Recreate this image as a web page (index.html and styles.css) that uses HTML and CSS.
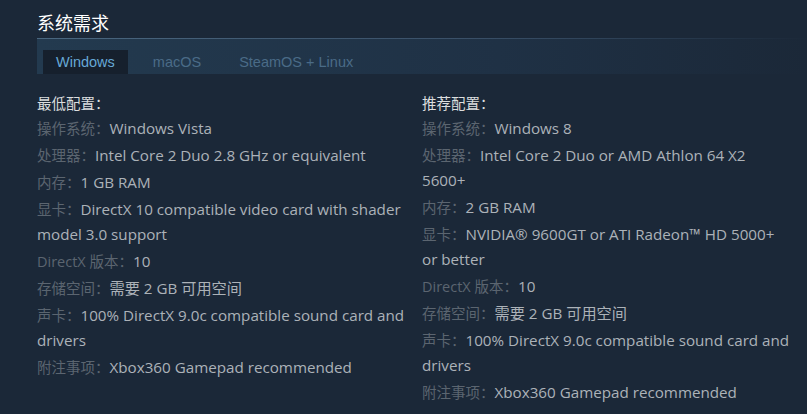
FILE: index.html
```html
<!DOCTYPE html>
<html lang="zh-CN">
<head>
  <meta charset="UTF-8">
  <title>系统需求</title>
  <link rel="stylesheet" href="styles.css">
</head>
<body>
  <div class="sysreq">
    <h2>系统需求</h2>

    <div class="tabs">
      <div class="tab active">Windows</div>
      <div class="tab">macOS</div>
      <div class="tab">SteamOS + Linux</div>
    </div>

    <div class="req-cols">
      <div class="req-col">
        <div class="req-title">最低配置：</div>
        <ul>
          <li><span class="lbl">操作系统：</span>Windows Vista</li>
          <li><span class="lbl">处理器：</span>Intel Core 2 Duo 2.8 GHz or equivalent</li>
          <li><span class="lbl">内存：</span>1 GB RAM</li>
          <li><span class="lbl">显卡：</span>DirectX 10 compatible video card with shader model 3.0 support</li>
          <li><span class="lbl">DirectX 版本：</span>10</li>
          <li><span class="lbl">存储空间：</span>需要 2 GB 可用空间</li>
          <li><span class="lbl">声卡：</span>100% DirectX 9.0c compatible sound card and drivers</li>
          <li><span class="lbl">附注事项：</span>Xbox360 Gamepad recommended</li>
        </ul>
      </div>
      <div class="req-col">
        <div class="req-title">推荐配置：</div>
        <ul>
          <li><span class="lbl">操作系统：</span>Windows 8</li>
          <li><span class="lbl">处理器：</span>Intel Core 2 Duo or AMD Athlon 64 X2 5600+</li>
          <li><span class="lbl">内存：</span>2 GB RAM</li>
          <li><span class="lbl">显卡：</span>NVIDIA® 9600GT or ATI Radeon™ HD 5000+ or better</li>
          <li><span class="lbl">DirectX 版本：</span>10</li>
          <li><span class="lbl">存储空间：</span>需要 2 GB 可用空间</li>
          <li><span class="lbl">声卡：</span>100% DirectX 9.0c compatible sound card and drivers</li>
          <li><span class="lbl">附注事项：</span>Xbox360 Gamepad recommended</li>
        </ul>
      </div>
    </div>
  </div>
</body>
</html>
```

FILE: styles.css
```css
body {
  margin: 0;
  background: #1b2838;
  font-family: "Open Sans", "Noto Sans CJK SC", sans-serif;
  color: #acb2b8;
}
.sysreq {
  padding: 9px 0 0 37px;
}
.sysreq h2 {
  margin: 0;
  font-family: "Noto Sans CJK SC", sans-serif;
  font-size: 18px;
  font-weight: normal;
  color: #ffffff;
  line-height: 26px;
  height: 29px;
}
.tabs {
  display: flex;
  gap: 12px;
  height: 24px;
  padding: 11px 0 0 6px;
  border-top: 1px solid #4a6780;
  border-image: linear-gradient(to right, #4a6780 0%, #3a5068 55%, rgba(27,40,56,0) 100%) 1;
  background: linear-gradient(to right, #233a4f 0%, #1f3145 60%, #1b2838 100%);
}
.tab {
  padding: 0 13px;
  font-family: "Liberation Sans", Arial, sans-serif;
  font-size: 14.5px;
  line-height: 24px;
  color: #4a6b87;
}
.tab.active {
  background: #16202d;
  color: #66a8d6;
}
.req-cols {
  display: flex;
  gap: 17px;
  margin-top: 17px;
}
.req-col {
  width: 368px;
  font-size: 15.2px;
  line-height: 25px;
}
.req-title {
  font-size: 14.5px;
  color: #dcdedf;
}
.req-col ul {
  list-style: none;
  margin: 0;
  padding: 0;
}
.req-col li {
  margin-bottom: 2px;
}
.lbl {
  font-size: 14.5px;
  color: #5b6570;
}
```
